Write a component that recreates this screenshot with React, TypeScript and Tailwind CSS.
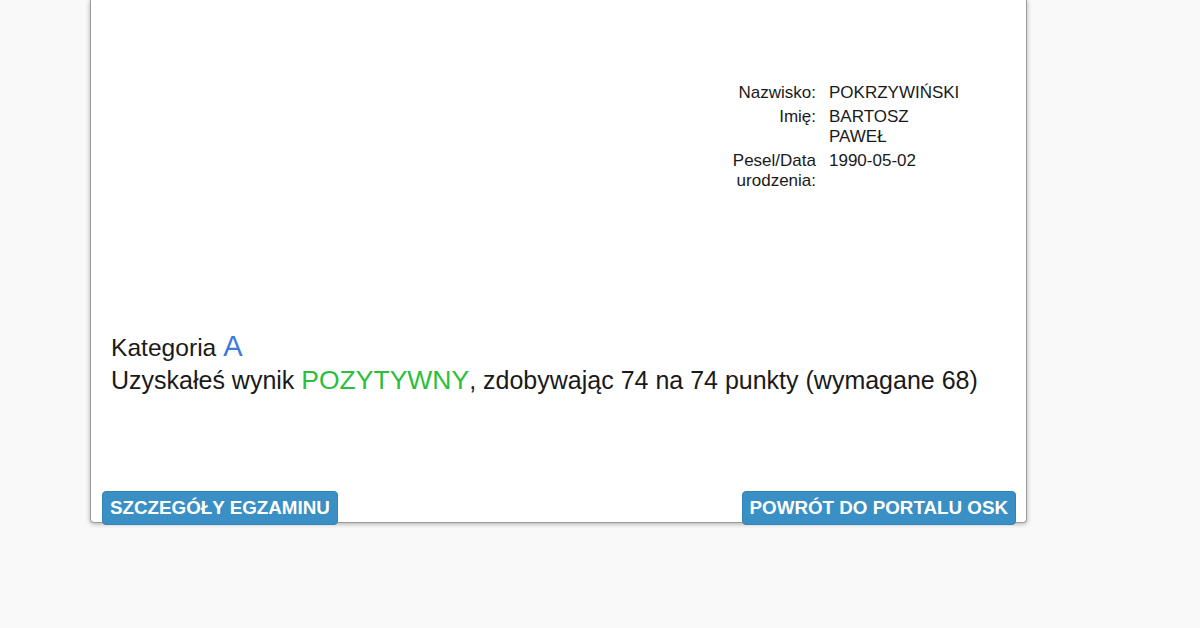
import React from "react";

export default function App() {
  return (
    <div className="min-h-screen bg-[#f9f9f9] font-['Liberation_Sans',Arial,sans-serif] text-[#1a1a1a]">
      <div className="ml-[90px] w-[937px] h-[523px] bg-white border border-t-0 border-[#9a9a9a] rounded-b-[4px] shadow-[0_1px_5px_rgba(0,0,0,0.3)] flex flex-col">
        <div className="pt-[83px] flex justify-end pr-[63px]">
          <div className="grid grid-cols-[85px_134px] gap-x-[13px] gap-y-[4px] text-[17px] leading-[20px]">
            <div className="text-right">Nazwisko:</div>
            <div>POKRZYWIŃSKI</div>
            <div className="text-right">Imię:</div>
            <div>BARTOSZ PAWEŁ</div>
            <div className="text-right">Pesel/Data urodzenia:</div>
            <div>1990-05-02</div>
          </div>
        </div>
        <div className="mt-[139px] pl-[20px] text-[25px] leading-[32px]">
          <div>
            <span className="text-[24.6px]">Kategoria</span> <span className="text-[29px] text-[#3f7ad6]">A</span>
          </div>
          <div>
            Uzyskałeś wynik <span className="text-[26.5px] text-[#2bbf3b]">POZYTYWNY</span>, zdobywając 74 na 74 punkty (wymagane 68)
          </div>
        </div>
        <div className="mt-auto -mb-[3px] flex justify-between pl-[11px] pr-[10px]">
          <button className="h-[34px] px-[7px] rounded-[4px] bg-[#3a8fc4] border border-[#3183b6] text-white font-bold text-[18.8px] leading-none">
            SZCZEGÓŁY EGZAMINU
          </button>
          <button className="h-[34px] px-[7px] rounded-[4px] bg-[#3a8fc4] border border-[#3183b6] text-white font-bold text-[18.8px] leading-none">
            POWRÓT DO PORTALU OSK
          </button>
        </div>
      </div>
    </div>
  );
}
